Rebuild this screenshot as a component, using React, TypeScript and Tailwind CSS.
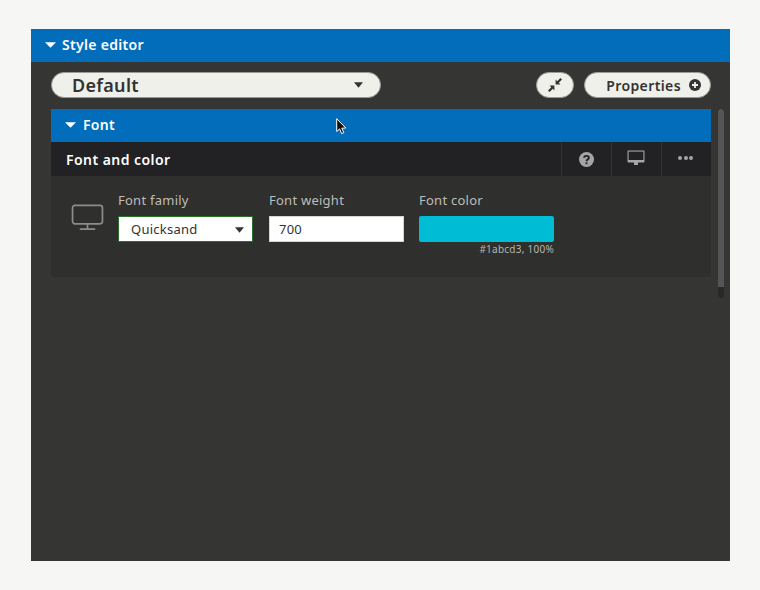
import React from 'react';

const Caret = ({ className }: { className: string }) => (
  <svg viewBox="0 0 10 6" preserveAspectRatio="none" className={className}>
    <path d="M0 0.2 L10 0.2 L5 5.8 Z" fill="currentColor" />
  </svg>
);

const Monitor = ({ className }: { className: string }) => (
  <svg viewBox="0 0 34 28" className={className} fill="none" stroke="currentColor">
    <rect x="1.5" y="1.5" width="31" height="19" rx="2.5" strokeWidth="1.8" />
    <path d="M17 21 V25.5 M9 26 H25" strokeWidth="1.8" />
  </svg>
);

export default function App() {
  return (
    <div className="w-[760px] h-[590px] bg-[#f6f6f4] pt-[29px] pl-[31px] overflow-hidden relative font-['Noto_Sans','Open_Sans',sans-serif]">
      <div className="w-[699px] h-[532px] bg-[#353533] flex flex-col">
        {/* Style editor bar */}
        <div className="h-[33px] bg-[#016dbb] flex items-center pl-[14px] pb-[2px] gap-[6px] text-white text-[14px] font-semibold tracking-[0.3px]">
          <Caret className="w-[11px] h-[6px] text-white" />
          <span>Style editor</span>
        </div>

        {/* Toolbar */}
        <div className="h-[47px] flex items-center pl-[20px] pr-[19px] pb-[1px]">
          <div className="w-[330px] h-[26px] rounded-full bg-[#f0f0ea] border border-[#9a9a96] flex items-center justify-between pl-[20px] pr-[17px] text-[#333] text-[18px] font-semibold tracking-[0.3px]">
            <span>Default</span>
            <Caret className="w-[9px] h-[6px] text-[#333]" />
          </div>
          <div className="ml-auto w-[38px] h-[26px] rounded-full bg-[#f0f0ea] border border-[#9a9a96] flex items-center justify-center">
            <svg viewBox="0 0 14 14" className="w-[14px] h-[14px] text-[#333]" fill="currentColor">
              <path d="M7.6 6.4 V1.6 L9.2 3.2 L12.4 0 L14 1.6 L10.8 4.8 L12.4 6.4 Z" />
              <path d="M6.4 7.6 V12.4 L4.8 10.8 L1.6 14 L0 12.4 L3.2 9.2 L1.6 7.6 Z" />
            </svg>
          </div>
          <div className="ml-[10px] w-[127px] h-[26px] rounded-full bg-[#f0f0ea] border border-[#9a9a96] flex items-center justify-end pr-[9px] gap-[8px] text-[#333] text-[14px] font-semibold tracking-[0.4px]">
            <span>Properties</span>
            <svg viewBox="0 0 12 12" className="w-[12px] h-[12px]">
              <circle cx="6" cy="6" r="6" fill="#333" />
              <path d="M6 3 V9 M3 6 H9" stroke="#f0f0ea" strokeWidth="1.8" />
            </svg>
          </div>
        </div>

        {/* Content + scrollbar */}
        <div className="flex pl-[20px]">
          <div className="w-[660px]">
            <div className="h-[33px] bg-[#016dbb] flex items-center pl-[14px] pb-[2px] gap-[7px] text-white text-[14px] font-semibold tracking-[0.3px]">
              <Caret className="w-[11px] h-[6px] text-white" />
              <span>Font</span>
            </div>

            <div className="h-[34px] bg-[#222224] flex items-center pl-[15px] text-white text-[14px] font-semibold tracking-[0.45px]">
              <span className="flex-1">Font and color</span>
              <div className="w-[50px] h-full border-l border-[#333335] flex items-center justify-center pr-[1px]">
                <svg viewBox="0 0 16 16" className="w-[15px] h-[15px]">
                  <circle cx="8" cy="8" r="8" fill="#a5a5a5" />
                  <path d="M5.4 6.2 C5.4 3.4 10.6 3.4 10.6 6.2 C10.6 8 8 7.8 8 9.8" fill="none" stroke="#222224" strokeWidth="2" />
                  <rect x="7" y="11" width="2" height="2" fill="#222224" />
                </svg>
              </div>
              <div className="w-[50px] h-full border-l border-[#333335] flex items-center justify-center pr-[2px]">
                <svg viewBox="0 0 18 16" className="w-[18px] h-[16px] mb-[2px]">
                  <path d="M1.5 0.5 H16.5 A1 1 0 0 1 17.5 1.5 V11.5 A1 1 0 0 1 16.5 12.5 H11 V15 H7 V12.5 H1.5 A1 1 0 0 1 0.5 11.5 V1.5 A1 1 0 0 1 1.5 0.5 Z" fill="#a5a5a5" />
                  <rect x="1.6" y="1.6" width="14.8" height="8.4" fill="#222224" />
                </svg>
              </div>
              <div className="w-[50px] h-full border-l border-[#333335] flex items-center justify-center gap-[1.5px] pb-[3px] pr-[2px]">
                <span className="w-[4px] h-[4px] rounded-full bg-[#a5a5a5]" />
                <span className="w-[4px] h-[4px] rounded-full bg-[#a5a5a5]" />
                <span className="w-[4px] h-[4px] rounded-full bg-[#a5a5a5]" />
              </div>
            </div>

            <div className="h-[101px] bg-[#2f2f2d] flex pl-[20px] pt-[15px]">
              <Monitor className="w-[33px] h-[27px] mt-[13px] text-[#8c8c8c]" />
              <div className="ml-[14px] w-[135px]">
                <div className="text-[13px] leading-[18px] text-[#bdbdbb] tracking-[0.25px]">Font family</div>
                <div className="mt-[7px] h-[26px] bg-white border border-[#2c6e2c] flex items-center justify-between pl-[12px] pr-[8px] pt-[1px] text-[13px] text-[#333] tracking-[0.25px]">
                  <span>Quicksand</span>
                  <Caret className="w-[9px] h-[6px] text-[#333]" />
                </div>
              </div>
              <div className="ml-[16px] w-[135px]">
                <div className="text-[13px] leading-[18px] text-[#bdbdbb] tracking-[0.25px]">Font weight</div>
                <div className="mt-[7px] h-[26px] bg-white border border-[#d4d4d4] flex items-center pl-[9px] pt-[1px] text-[13px] text-[#333] tracking-[0.25px]">
                  700
                </div>
              </div>
              <div className="ml-[15px] w-[135px]">
                <div className="text-[13px] leading-[18px] text-[#bdbdbb] tracking-[0.25px]">Font color</div>
                <div className="mt-[7px] h-[26px] bg-[#00bcd4] rounded-[2px]" />
                <div className="text-right text-[10px] leading-[14px] text-[#b5b5b3] tracking-[0.25px]">#1abcd3, 100%</div>
              </div>
            </div>
          </div>
          {/* Scrollbar */}
          <div className="ml-[7px] w-[6px] h-[189px] bg-[#282828] rounded-b-full">
            <div className="h-[178px] bg-[#555557] rounded-t-full" />
          </div>
        </div>
      </div>

      {/* Mouse cursor */}
      <svg viewBox="0 0 12 18" className="absolute left-[336px] top-[118px] w-[12px] h-[18px]">
        <path d="M0.7 0.7 V13.5 L3.6 10.9 L5.6 15.6 L7.8 14.7 L5.8 10.2 L9.8 10 Z" fill="#111" stroke="#fff" strokeWidth="1" />
      </svg>
    </div>
  );
}
